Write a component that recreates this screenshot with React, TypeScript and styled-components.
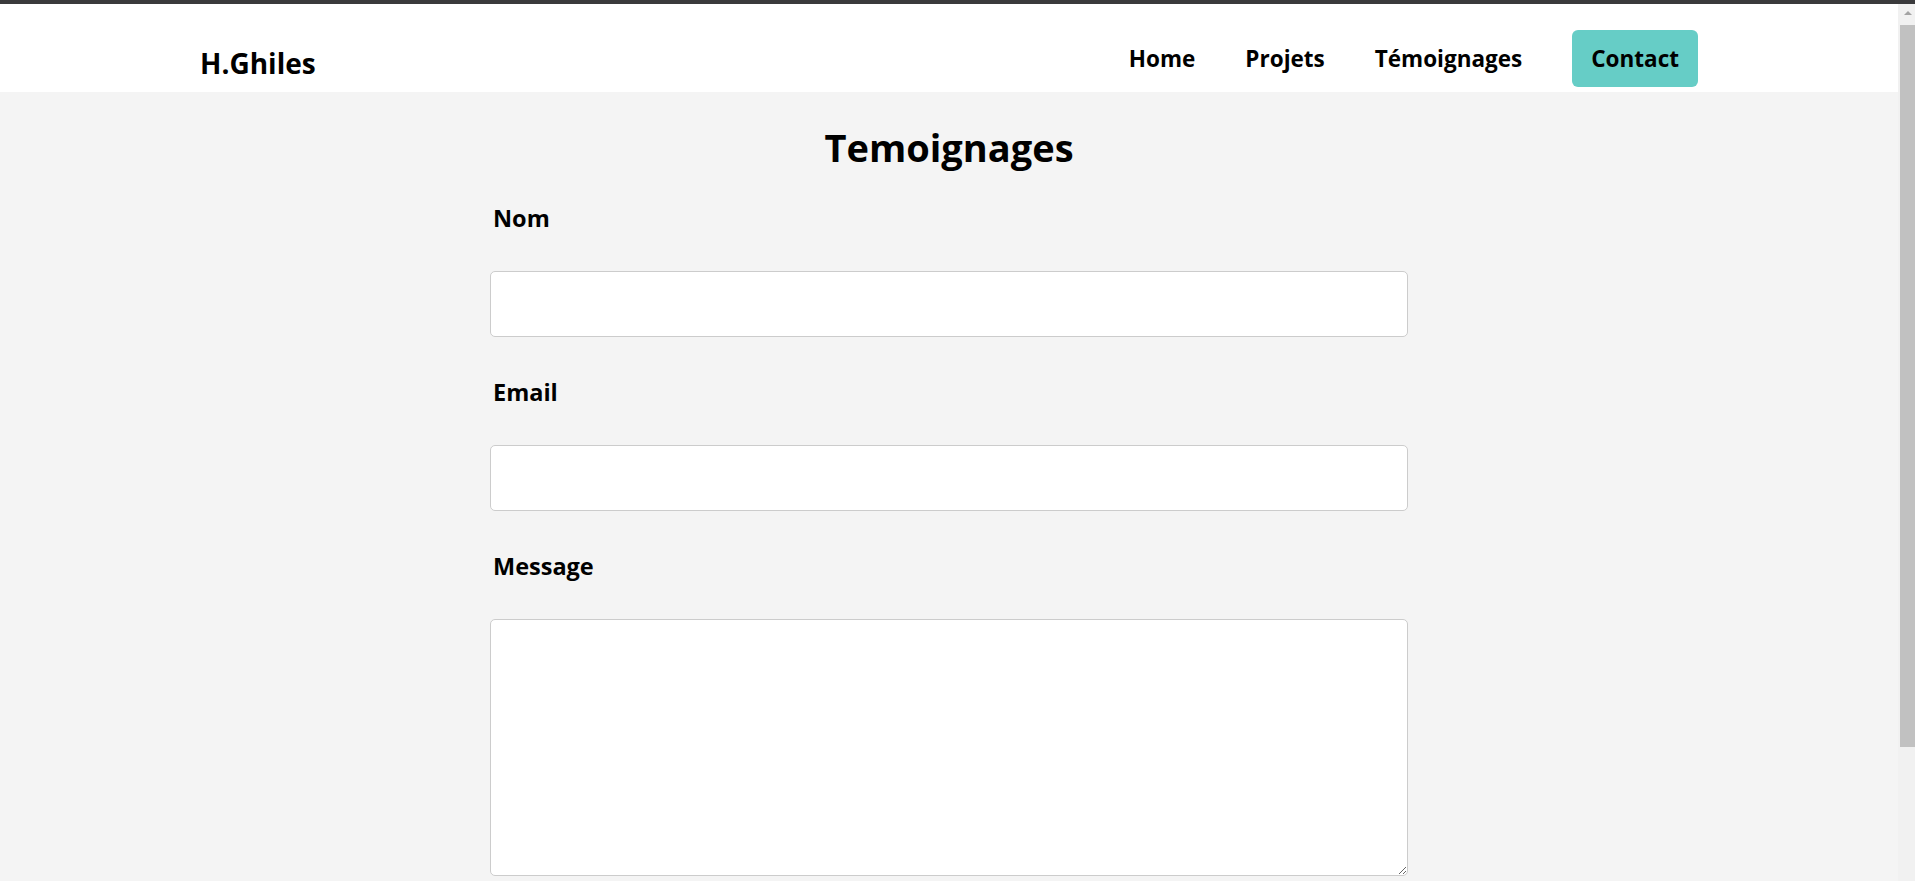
import React from "react";
import styled, { createGlobalStyle } from "styled-components";

const GlobalStyle = createGlobalStyle`
  *, *::before, *::after { box-sizing: border-box; }
  html { background: #f4f4f4; }
  body {
    margin: 0;
    font-family: "Open Sans", "Noto Sans", sans-serif;
    color: #000;
    background: #f4f4f4;
  }
`;

const TopStrip = styled.div`
  height: 4px;
  background: #3a3a3c;
`;

const Shell = styled.div`
  display: flex;
  align-items: flex-start;
`;

const Page = styled.div`
  flex: 1;
  min-width: 0;
`;

const ScrollRail = styled.div`
  position: sticky;
  top: 0;
  flex: none;
  width: 17px;
  height: calc(100vh - 4px);
  background: #f1f1f1;
  display: flex;
  flex-direction: column;
`;

const ScrollArrow = styled.div`
  height: 17px;
  flex: none;
  display: flex;
  align-items: center;
  justify-content: center;
  padding-left: 2px;

  &::after {
    content: "";
    width: 0;
    height: 0;
    border-left: 4px solid transparent;
    border-right: 4px solid transparent;
    border-bottom: 4px solid #a3a3a3;
  }
`;

const ScrollThumb = styled.div`
  height: 722px;
  margin: 4px 0 0 2px;
  background: #c1c1c1;
`;

const Header = styled.header`
  height: 88px;
  padding: 20px 200px 0;
  background: #fff;
  display: flex;
  align-items: center;
  justify-content: space-between;
`;

const Logo = styled.div`
  font-size: 28px;
  font-weight: 700;
  line-height: 38px;
  padding-top: 10px;
`;

const Nav = styled.nav`
  display: flex;
  align-items: center;
  gap: 50px;
`;

const NavLink = styled.a`
  font-size: 22.5px;
  font-weight: 700;
  line-height: 31px;
  color: #000;
  text-decoration: none;
`;

const ContactButton = styled.a`
  font-size: 22.5px;
  font-weight: 700;
  line-height: 31px;
  color: #000;
  text-decoration: none;
  background: #66cdc6;
  border-radius: 6px;
  padding: 13px 19px;
`;

const Main = styled.main`
  padding: 29px 0 156px;
`;

const Title = styled.h1`
  margin: 0;
  font-size: 38px;
  font-weight: 700;
  line-height: 52px;
  text-align: center;
`;

const Form = styled.form`
  width: 918px;
  margin: 29px auto 0;
  display: flex;
  flex-direction: column;
  gap: 39px;
`;

const Field = styled.div`
  display: flex;
  flex-direction: column;
  gap: 37px;
`;

const Label = styled.label`
  font-size: 23.5px;
  font-weight: 700;
  line-height: 32px;
  padding-left: 3px;
`;

const TextInput = styled.input`
  display: block;
  width: 100%;
  height: 66px;
  border: 1px solid #cccccc;
  border-radius: 5px;
  background: #fff;
  font: inherit;
  padding: 0 12px;
`;

const MessageArea = styled.textarea`
  display: block;
  width: 100%;
  height: 257px;
  border: 1px solid #cccccc;
  border-radius: 5px;
  background: #fff;
  font: inherit;
  padding: 12px;
`;

export default function App() {
  return (
    <>
      <GlobalStyle />
      <TopStrip />
      <Shell>
        <Page>
          <Header>
            <Logo>H.Ghiles</Logo>
            <Nav>
              <NavLink href="#">Home</NavLink>
              <NavLink href="#">Projets</NavLink>
              <NavLink href="#">Témoignages</NavLink>
              <ContactButton href="#">Contact</ContactButton>
            </Nav>
          </Header>
          <Main>
            <Title>Temoignages</Title>
            <Form onSubmit={(e) => e.preventDefault()}>
              <Field>
                <Label htmlFor="nom">Nom</Label>
                <TextInput id="nom" type="text" />
              </Field>
              <Field>
                <Label htmlFor="email">Email</Label>
                <TextInput id="email" type="email" />
              </Field>
              <Field>
                <Label htmlFor="message">Message</Label>
                <MessageArea id="message" />
              </Field>
            </Form>
          </Main>
        </Page>
        <ScrollRail aria-hidden="true">
          <ScrollArrow />
          <ScrollThumb />
        </ScrollRail>
      </Shell>
    </>
  );
}
